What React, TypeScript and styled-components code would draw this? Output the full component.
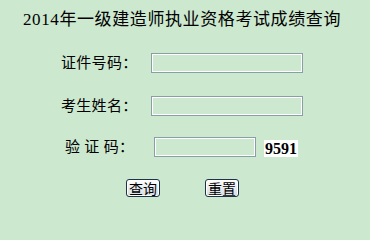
import React from "react";
import styled, { createGlobalStyle } from "styled-components";

const GlobalStyle = createGlobalStyle`
  html, body {
    margin: 0;
    padding: 0;
    background: #cce8cf;
  }
  body {
    font-family: "Liberation Serif", "Noto Sans CJK SC", serif;
    color: #000;
  }
`;

const Page = styled.div`
  width: 370px;
  height: 210px;
  background: #cce8cf;
  overflow: hidden;
`;

const Title = styled.h1`
  margin: 0;
  padding: 10px 6px 0 0;
  height: 20px;
  line-height: 20px;
  font-size: 17px;
  letter-spacing: 0.6px;
  font-weight: normal;
  text-align: center;
  white-space: nowrap;
`;

const Form = styled.form`
  display: flex;
  flex-direction: column;
  margin: 0;
`;

const Row = styled.div<{ $top: number; $left: number }>`
  display: flex;
  align-items: center;
  height: 20px;
  margin-top: ${(p) => p.$top}px;
  padding-left: ${(p) => p.$left}px;
`;

const Label = styled.label<{ $width: number }>`
  width: ${(p) => p.$width}px;
  font-size: 15px;
  letter-spacing: 0.3px;
  line-height: 20px;
  white-space: pre;
`;

const TextInput = styled.input<{ $width: number }>`
  box-sizing: border-box;
  width: ${(p) => p.$width}px;
  height: 20px;
  margin: 0;
  padding: 0 3px;
  border: 1px solid #8a9ea8;
  box-shadow: inset 0 0 0 1px #ffffff;
  background: #cce8cf;
  font-size: 13px;
  outline: none;
`;

const CodeBox = styled.span`
  box-sizing: border-box;
  width: 34px;
  height: 17px;
  margin-left: 8px;
  margin-top: 3px;
  background: #ffffff;
  font-family: "Liberation Serif", serif;
  font-weight: bold;
  font-size: 16px;
  line-height: 17px;
  text-align: center;
`;

const Buttons = styled.div`
  display: flex;
  gap: 45px;
  padding-left: 126px;
  margin-top: 22px;
`;

const Button = styled.button`
  box-sizing: border-box;
  width: 34px;
  height: 18px;
  margin: 0;
  padding: 0;
  border: 1px solid #1f3347;
  border-radius: 3px;
  box-shadow: inset 0 0 0 1px #ffffff;
  background: linear-gradient(#ffffff, #e4e9ee 60%, #d6dde4);
  font-family: "Noto Sans CJK SC", sans-serif;
  font-size: 14px;
  line-height: 16px;
  color: #000;
`;

export default function App() {
  return (
    <Page>
      <GlobalStyle />
      <Title>2014年一级建造师执业资格考试成绩查询</Title>
      <Form onSubmit={(e) => e.preventDefault()}>
        <Row $top={23} $left={61}>
          <Label $width={90}>证件号码：</Label>
          <TextInput $width={152} />
        </Row>
        <Row $top={23} $left={61}>
          <Label $width={90}>考生姓名：</Label>
          <TextInput $width={152} />
        </Row>
        <Row $top={21} $left={65}>
          <Label $width={89}>验 证 码：</Label>
          <TextInput $width={102} />
          <CodeBox>9591</CodeBox>
        </Row>
        <Buttons>
          <Button type="submit">查询</Button>
          <Button type="reset">重置</Button>
        </Buttons>
      </Form>
    </Page>
  );
}
